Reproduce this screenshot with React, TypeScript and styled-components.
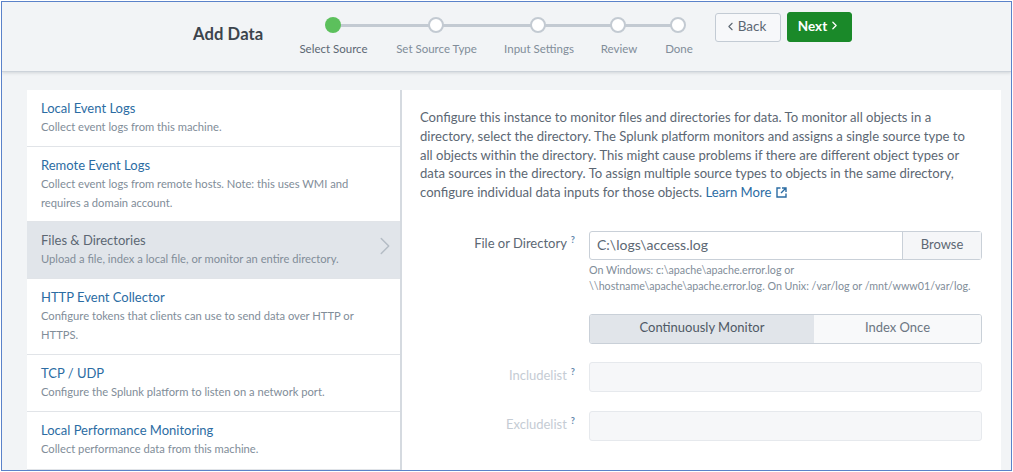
import { FunctionComponent } from 'react'
import styled, { createGlobalStyle } from 'styled-components'
import { ChevronLeft, ChevronRight } from 'lucide-react'

const Global = createGlobalStyle`
  html, body {
    margin: 0;
    padding: 0;
    background: #fff;
  }
  body {
    font-family: "Lato", "Open Sans", Arial, sans-serif;
    color: #3c444d;
  }
`

const Frame = styled.div`
  box-sizing: border-box;
  width: 1011px;
  height: 470px;
  margin: 1px 0 0 1px;
  border: 1px solid #5b82c9;
  background: #f2f4f6;
  overflow: hidden;
  display: flex;
  flex-direction: column;
`

const Header = styled.header`
  box-sizing: border-box;
  flex: none;
  height: 70px;
  padding-left: 191px;
  display: flex;
  align-items: flex-start;
  border-bottom: 1px solid #cdd3da;
  box-shadow: 0 1px 3px rgba(60, 70, 85, 0.18);
`

const Title = styled.h1`
  margin: 21px 0 0;
  width: 88px;
  font-size: 16.6px;
  line-height: 22px;
  font-weight: 700;
  color: #3c444d;
  letter-spacing: 0.1px;
`

const Steps = styled.ol`
  list-style: none;
  margin: 0;
  padding: 0;
  display: flex;
`

const Step = styled.li<{ $width: number; $reach: number }>`
  position: relative;
  width: ${(p) => p.$width}px;
  display: flex;
  flex-direction: column;
  align-items: center;
  &::after {
    content: '';
    display: ${(p) => (p.$reach ? 'block' : 'none')};
    position: absolute;
    top: 22px;
    left: 50%;
    width: ${(p) => p.$reach}px;
    height: 3px;
    background: #c3cad2;
  }
`

const Dot = styled.span<{ $active?: boolean }>`
  position: relative;
  z-index: 1;
  box-sizing: border-box;
  width: 16px;
  height: 16px;
  margin-top: 15px;
  border-radius: 50%;
  background: ${(p) => (p.$active ? '#5cc05c' : '#fff')};
  border: ${(p) => (p.$active ? 'none' : '2px solid #c3cad2')};
`

const StepLabel = styled.span<{ $active?: boolean }>`
  margin: 8px 0 0 2px;
  font-size: 11.5px;
  line-height: 15px;
  white-space: nowrap;
  color: ${(p) => (p.$active ? '#5c6773' : '#818d99')};
`

const Actions = styled.div`
  display: flex;
  gap: 6px;
  margin: 10px 0 0 6px;
`

const NavButton = styled.button<{ $primary?: boolean }>`
  box-sizing: border-box;
  width: ${(p) => (p.$primary ? 65 : 66)}px;
  height: ${(p) => (p.$primary ? 30 : 29)}px;
  margin-top: ${(p) => (p.$primary ? 0 : 1)}px;
  padding: 0 ${(p) => (p.$primary ? 0 : 6)}px 3px 0;
  display: flex;
  align-items: center;
  justify-content: center;
  gap: 1px;
  border-radius: 3px;
  font-family: inherit;
  font-size: 13.5px;
  font-weight: ${(p) => (p.$primary ? 700 : 400)};
  color: ${(p) => (p.$primary ? '#fff' : '#5c6773')};
  background: ${(p) => (p.$primary ? '#1a8929' : '#f7f8fa')};
  border: 1px solid ${(p) => (p.$primary ? '#1a8929' : '#c3cbd4')};
`

const Panel = styled.main`
  flex: none;
  margin: 18px 10px 0 25px;
  height: 400px;
  display: flex;
  background: #fff;
`

const SourceList = styled.ul`
  list-style: none;
  margin: 0;
  padding: 0;
  box-sizing: border-box;
  width: 375px;
  flex: none;
  border-right: 2px solid #d5dae0;
`

const SourceItem = styled.li<{ $selected?: boolean; $height: number }>`
  box-sizing: border-box;
  position: relative;
  height: ${(p) => p.$height}px;
  padding: 9px 14px 0;
  background: ${(p) => (p.$selected ? '#e1e5ea' : '#fff')};
  border-bottom: 1px solid #e1e4e8;
  svg {
    position: absolute;
    right: 0;
    top: 9px;
  }
`

const SourceName = styled.a<{ $selected?: boolean }>`
  display: block;
  font-size: 13px;
  line-height: 18px;
  color: ${(p) => (p.$selected ? '#5c6773' : '#2b6ca3')};
`

const SourceText = styled.p`
  margin: 0;
  font-size: 11.2px;
  line-height: 19px;
  color: #818d99;
`

const Detail = styled.section`
  flex: 1;
  padding: 18px 19px 0 18px;
`

const Intro = styled.p`
  max-width: 548px;
  margin: 0 0 29px;
  font-size: 13.1px;
  line-height: 18.8px;
  color: #5c6773;
`

const LearnLink = styled.a`
  color: #2b6ca3;
  svg {
    margin-left: 5px;
    vertical-align: -1px;
  }
`

const FormRow = styled.div<{ $gap: number }>`
  display: grid;
  grid-template-columns: 155px 393px;
  column-gap: 14px;
  margin-bottom: ${(p) => p.$gap}px;
`

const FieldLabel = styled.label<{ $disabled?: boolean }>`
  justify-self: end;
  padding-top: ${(p) => (p.$disabled ? 4 : 3)}px;
  font-size: 13px;
  line-height: 18px;
  white-space: nowrap;
  color: ${(p) => (p.$disabled ? '#c5ccd4' : '#5c6773')};
  sup {
    margin-left: 4px;
    font-size: 9px;
    line-height: 0;
    font-weight: 700;
    color: #5f87ab;
  }
`

const PathField = styled.div`
  box-sizing: border-box;
  height: 29px;
  display: flex;
  border: 1px solid #c9d0d8;
  border-radius: 3px;
`

const PathValue = styled.span`
  flex: 1;
  padding-left: 7px;
  font-size: 14px;
  line-height: 25px;
  color: #5c6773;
`

const BrowseButton = styled.span`
  box-sizing: border-box;
  width: 79px;
  border-left: 1px solid #c9d0d8;
  background: #f5f6f8;
  text-align: center;
  font-size: 13px;
  line-height: 25px;
  color: #5c6773;
`

const Help = styled.p`
  grid-column: 2;
  margin: 2px 0 0;
  font-size: 10.7px;
  line-height: 16px;
  white-space: nowrap;
  color: #818d99;
`

const Toggle = styled.div`
  grid-column: 2;
  box-sizing: border-box;
  height: 30px;
  display: flex;
  border: 1px solid #c9d0d8;
  border-radius: 3px;
  overflow: hidden;
`

const ToggleOption = styled.span<{ $on?: boolean; $width: number }>`
  width: ${(p) => p.$width}px;
  text-align: center;
  font-size: 13px;
  line-height: 25px;
  color: ${(p) => (p.$on ? '#4f5965' : '#6b7682')};
  background: ${(p) => (p.$on ? '#e1e5ea' : '#f8f9fa')};
`

const EmptyField = styled.div`
  box-sizing: border-box;
  height: 30px;
  border: 1px solid #e6e9ed;
  border-radius: 3px;
  background: #f6f7f9;
`

type Source = {
  name: string
  text: string[]
  height: number
  selected?: boolean
}

const sources: Source[] = [
  { name: 'Local Event Logs', text: ['Collect event logs from this machine.'], height: 57 },
  {
    name: 'Remote Event Logs',
    text: [
      'Collect event logs from remote hosts. Note: this uses WMI and',
      'requires a domain account.',
    ],
    height: 75,
  },
  {
    name: 'Files & Directories',
    text: ['Upload a file, index a local file, or monitor an entire directory.'],
    height: 57,
    selected: true,
  },
  {
    name: 'HTTP Event Collector',
    text: ['Configure tokens that clients can use to send data over HTTP or', 'HTTPS.'],
    height: 76,
  },
  { name: 'TCP / UDP', text: ['Configure the Splunk platform to listen on a network port.'], height: 57 },
  { name: 'Local Performance Monitoring', text: ['Collect performance data from this machine.'], height: 58 },
]

const steps = [
  { label: 'Select Source', width: 103, reach: 103, active: true },
  { label: 'Set Source Type', width: 103, reach: 102 },
  { label: 'Input Settings', width: 102, reach: 80 },
  { label: 'Review', width: 58, reach: 60 },
  { label: 'Done', width: 62, reach: 0 },
]

const ExternalIcon: FunctionComponent = () => (
  <svg width="11" height="11" viewBox="0 0 11 11" fill="none" stroke="#2b6ca3" strokeWidth="1.4">
    <path d="M4.5 1H1v9h9V6.5" />
    <path d="M6 1h4v4M10 1L5 6" />
  </svg>
)

const App: FunctionComponent = () => (
  <Frame>
    <Global />
    <Header>
      <Title>Add Data</Title>
      <Steps>
        {steps.map((s) => (
          <Step key={s.label} $width={s.width} $reach={s.reach}>
            <Dot $active={s.active} />
            <StepLabel $active={s.active}>{s.label}</StepLabel>
          </Step>
        ))}
      </Steps>
      <Actions>
        <NavButton>
          <ChevronLeft size={13} strokeWidth={2} />
          Back
        </NavButton>
        <NavButton $primary>
          Next
          <ChevronRight size={13} strokeWidth={2.4} />
        </NavButton>
      </Actions>
    </Header>
    <Panel>
      <SourceList>
        {sources.map((s) => (
          <SourceItem key={s.name} $selected={s.selected} $height={s.height}>
            <SourceName $selected={s.selected}>{s.name}</SourceName>
            <SourceText>
              {s.text.map((line, i) => (
                <span key={line}>
                  {i > 0 && <br />}
                  {line}
                </span>
              ))}
            </SourceText>
            {s.selected && <ChevronRight size={30} strokeWidth={1.2} color="#b4bcc5" />}
          </SourceItem>
        ))}
      </SourceList>
      <Detail>
        <Intro>
          Configure this instance to monitor files and directories for data. To monitor all objects in a
          directory, select the directory. The Splunk platform monitors and assigns a single source type to
          all objects within the directory. This might cause problems if there are different object types or
          data sources in the directory. To assign multiple source types to objects in the same directory,
          configure individual data inputs for those objects.{' '}
          <LearnLink>
            Learn More
            <ExternalIcon />
          </LearnLink>
        </Intro>
        <FormRow $gap={20}>
          <FieldLabel>
            File or Directory<sup>?</sup>
          </FieldLabel>
          <PathField>
            <PathValue>C:\logs\access.log</PathValue>
            <BrowseButton>Browse</BrowseButton>
          </PathField>
          <Help>
            On Windows: c:\apache\apache.error.log or
            <br />
            \\hostname\apache\apache.error.log. On Unix: /var/log or /mnt/www01/var/log.
          </Help>
        </FormRow>
        <FormRow $gap={18}>
          <Toggle>
            <ToggleOption $on $width={224}>
              Continuously Monitor
            </ToggleOption>
            <ToggleOption $width={167}>Index Once</ToggleOption>
          </Toggle>
        </FormRow>
        <FormRow $gap={19}>
          <FieldLabel $disabled>
            Includelist<sup>?</sup>
          </FieldLabel>
          <EmptyField />
        </FormRow>
        <FormRow $gap={0}>
          <FieldLabel $disabled>
            Excludelist<sup>?</sup>
          </FieldLabel>
          <EmptyField />
        </FormRow>
      </Detail>
    </Panel>
  </Frame>
)

export default App
